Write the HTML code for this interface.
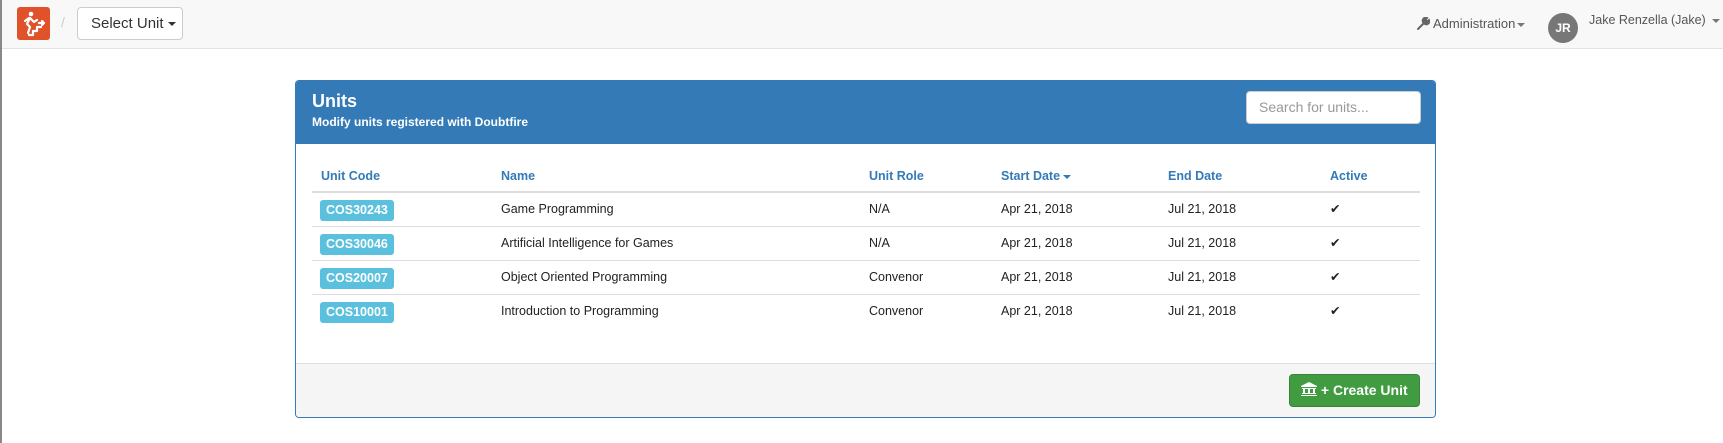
<!DOCTYPE html>
<html><head><meta charset="utf-8"><style>
*{box-sizing:border-box;margin:0;padding:0}
body{width:1723px;height:443px;background:#fff;font-family:"Liberation Sans",sans-serif;color:#333;position:relative;overflow:hidden;border-left:2px solid #888}
.nav{position:absolute;left:0;top:0;width:1723px;height:49px;background:#f8f8f8;border-bottom:1px solid #e3e3e3}
.abs{position:absolute;white-space:nowrap}
.logo{left:15px;top:7px;width:33px;height:33px;background:#e0532a;border-radius:3px}
.btn{left:75px;top:7px;width:106px;height:33px;border:1px solid #ccc;border-radius:4px;background:#fff;font-size:15px;line-height:31px;padding-left:13px;color:#333}
.caret{display:inline-block;width:0;height:0;border-left:4px solid transparent;border-right:4px solid transparent;border-top:4px solid #333;vertical-align:middle;margin-left:4px}
.panel{left:293px;top:80px;width:1141px;height:338px;border:1px solid #337ab7;border-radius:4px;overflow:hidden}
.ph{position:absolute;left:0;top:0;width:100%;height:63px;background:#337ab7;color:#fff}
.th{position:absolute;top:87px;font-size:12.5px;font-weight:bold;color:#337ab7;line-height:16px;white-space:nowrap}
.row{position:absolute;left:16px;width:1108px;height:34px;border-top:1px solid #ddd}
.cell{position:absolute;top:0;line-height:33px;font-size:12.5px;color:#222;white-space:nowrap}
.lbl{position:absolute;left:8px;top:7px;height:21px;padding:0 6px;background:#5bc0de;color:#fff;font-weight:bold;font-size:12.5px;line-height:21px;border-radius:3px}
.foot{position:absolute;left:0;top:282px;width:100%;height:56px;background:#f5f5f5;border-top:1px solid #ddd}
</style></head><body>
<div class="nav">
<div class="abs logo"><svg width="33" height="33" viewBox="0 0 33 33"><g fill="none" stroke="#fff" stroke-width="2.2" stroke-linecap="round" stroke-linejoin="round"><circle cx="14" cy="7" r="2.3" fill="#fff" stroke="none"/><path d="M13 11 L10 17 L13 20 L11 26"/><path d="M13 11 L17 15 L20 13"/><path d="M12 11 L8 14"/><path d="M12 28 H16 V24 H20 V20 H24"/><path d="M22 16 H27 M25 14 L27 16 L25 18"/></g></svg></div>
<div class="abs" style="left:59px;top:14px;color:#ccc;font-size:14px">/</div>
<div class="abs btn">Select Unit<span class="caret"></span></div>
<div class="abs" style="left:1415px;top:17px"><svg width="13" height="13" viewBox="0 0 13 13"><path d="M1 12 L7 6 M6 5 A3 3 0 0 1 10 1 L8.5 3 L10 4.5 L12 3 A3 3 0 0 1 8 7 Z" stroke="#666" stroke-width="2" fill="#666" stroke-linecap="round"/></svg></div>
<div class="abs" style="left:1431px;top:16px;font-size:13px;color:#555">Administration<span class="caret" style="border-top-color:#777;margin-left:2px"></span></div>
<div class="abs" style="left:1546px;top:13px;width:30px;height:30px;border-radius:50%;background:#777;color:#fff;font-weight:bold;font-size:12px;text-align:center;line-height:30px">JR</div>
<div class="abs" style="left:1587px;top:13px;font-size:12.5px;color:#555">Jake Renzella (Jake)<span class="caret" style="border-top-color:#777;margin-left:6px"></span></div>
</div>
<div class="abs panel">
<div class="ph">
<div class="abs" style="left:16px;top:10px;font-size:18px;font-weight:bold">Units</div>
<div class="abs" style="left:16px;top:34px;font-size:12px;font-weight:bold">Modify units registered with Doubtfire</div>
<div class="abs" style="left:950px;top:10px;width:175px;height:33px;background:#fff;border-radius:4px;border:1px solid #ccc;color:#999;font-size:14px;line-height:31px;padding-left:12px">Search for units...</div>
</div>
<div class="th" style="left:25px">Unit Code</div>
<div class="th" style="left:205px">Name</div>
<div class="th" style="left:573px">Unit Role</div>
<div class="th" style="left:705px">Start Date<span class="caret" style="border-top-color:#337ab7;margin-left:3px"></span></div>
<div class="th" style="left:872px">End Date</div>
<div class="th" style="left:1034px">Active</div>
<div class="row" style="top:110px;border-top:2px solid #ddd"><div class="lbl">COS30243</div><div class="cell" style="left:189px">Game Programming</div><div class="cell" style="left:557px">N/A</div><div class="cell" style="left:689px">Apr 21, 2018</div><div class="cell" style="left:856px">Jul 21, 2018</div><div class="cell" style="left:1018px">&#10004;</div></div>
<div class="row" style="top:145px"><div class="lbl">COS30046</div><div class="cell" style="left:189px">Artificial Intelligence for Games</div><div class="cell" style="left:557px">N/A</div><div class="cell" style="left:689px">Apr 21, 2018</div><div class="cell" style="left:856px">Jul 21, 2018</div><div class="cell" style="left:1018px">&#10004;</div></div>
<div class="row" style="top:179px"><div class="lbl">COS20007</div><div class="cell" style="left:189px">Object Oriented Programming</div><div class="cell" style="left:557px">Convenor</div><div class="cell" style="left:689px">Apr 21, 2018</div><div class="cell" style="left:856px">Jul 21, 2018</div><div class="cell" style="left:1018px">&#10004;</div></div>
<div class="row" style="top:213px"><div class="lbl">COS10001</div><div class="cell" style="left:189px">Introduction to Programming</div><div class="cell" style="left:557px">Convenor</div><div class="cell" style="left:689px">Apr 21, 2018</div><div class="cell" style="left:856px">Jul 21, 2018</div><div class="cell" style="left:1018px">&#10004;</div></div>
<div class="foot">
<div class="abs" style="left:993px;top:10px;width:131px;height:33px;background:#419c41;border:1px solid #398439;border-radius:4px;color:#fff;font-size:14px;font-weight:bold;line-height:31px;padding-left:11px"><svg width="16" height="14" viewBox="0 0 16 14" style="vertical-align:-1px"><path d="M8 0 L16 4 V5 H0 V4 Z M1 6 H15 V7 H1Z M2 7 H4 V11 H2Z M7 7 H9 V11 H7Z M12 7 H14 V11 H12Z M1 11 H15 V12 H1Z M0 13 H16 V14 H0Z" fill="#fff"/></svg> + Create Unit</div>
</div>
</div>
</body></html>
